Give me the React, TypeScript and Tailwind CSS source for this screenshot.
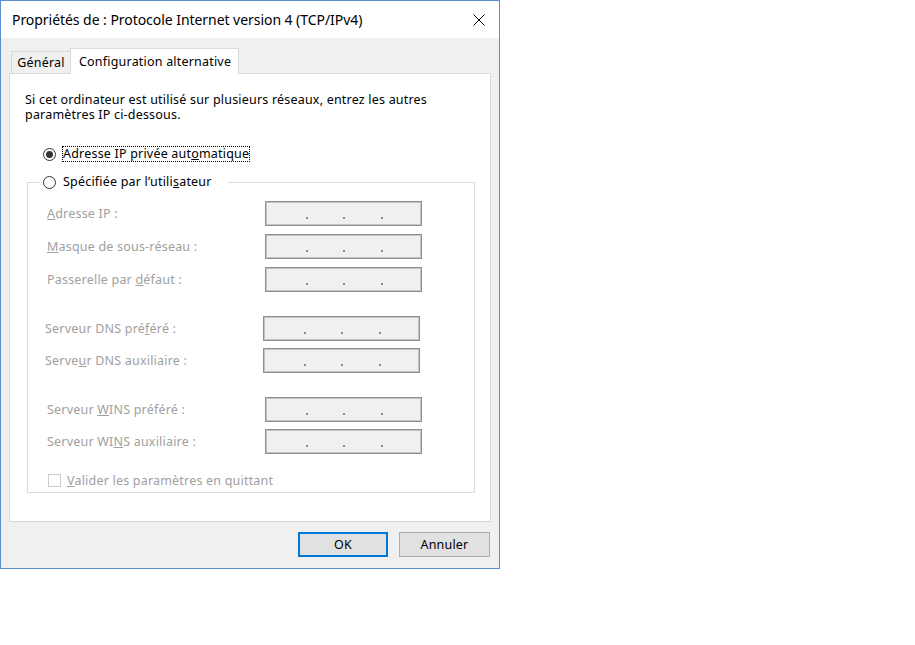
import React from "react";

const IpField = () => (
  <div className="w-[157px] h-[25px] border border-[#8f8f8f] bg-[#f0f0f0] shadow-[inset_0_0_0_1px_#c4c4c4] flex items-start pt-[15px]">
    <span className="ml-[40px] w-[2px] h-[2px] bg-[#8585a8]" />
    <span className="ml-[35px] w-[2px] h-[2px] bg-[#8585a8]" />
    <span className="ml-[36px] w-[2px] h-[2px] bg-[#8585a8]" />
  </div>
);

const Row = ({ children, shift }: { children: React.ReactNode; shift?: boolean }) => (
  <div className={"flex items-center h-[25px] " + (shift ? "pl-[17px]" : "pl-[19px]")}>
    <span className="w-[218px] text-[#a0a0a0] whitespace-nowrap">{children}</span>
    <IpField />
  </div>
);

const Radio = ({ checked }: { checked?: boolean }) => (
  <span className="w-[13px] h-[13px] rounded-full border border-[#333333] bg-white flex items-center justify-center shrink-0">
    {checked && <span className="w-[7px] h-[7px] rounded-full bg-[#333333]" />}
  </span>
);

export default function App() {
  return (
    <div
      className="w-[915px] h-[645px] bg-white text-black text-[12.5px] leading-[15px] tracking-[0.2px]"
      style={{ fontFamily: '"Segoe UI", "Noto Sans", sans-serif' }}
    >
      <div className="w-[500px] h-[569px] border border-[#5b8bd0] bg-[#f0f0f0] flex flex-col">
        {/* Title bar */}
        <div className="h-[37px] bg-white flex items-center justify-between pl-[11px]">
          <span className="text-[14px] tracking-[-0.05px] whitespace-nowrap">Propriétés de : Protocole Internet version 4 (TCP/IPv4)</span>
          <svg width="12" height="12" viewBox="0 0 12 12" className="mr-[14px] mt-[1px]">
            <path d="M0.5 0.5 L11.5 11.5 M11.5 0.5 L0.5 11.5" stroke="#000" strokeWidth="1" />
          </svg>
        </div>

        {/* Tabs */}
        <div className="mt-[10px] pl-[10px] flex items-end h-[25px]">
          <div className="w-[59px] h-[22px] border-l border-t border-[#d9d9d9] bg-[#f0f0f0] flex items-center justify-center">
            Général
          </div>
          <div className="relative z-10 w-[169px] h-[26px] -mb-px border-l border-t border-r border-[#d9d9d9] bg-white flex items-center pl-[8px] whitespace-nowrap">
            Configuration alternative
          </div>
        </div>

        {/* Panel */}
        <div className="mx-[8px] h-[449px] border border-[#d9d9d9] bg-white pt-[18px] px-[15px]">
          <div className="h-[15px] whitespace-nowrap">
            Si cet ordinateur est utilisé sur plusieurs réseaux, entrez les autres
          </div>
          <div className="h-[15px] whitespace-nowrap">paramètres IP ci-dessous.</div>

          <div className="mt-[24px] ml-[18px] h-[16px] flex items-center gap-[6px]">
            <Radio checked />
            <span className="border border-dotted border-black leading-[14px] whitespace-nowrap">
              Adresse IP privée aut<u>o</u>matique
            </span>
          </div>

          <fieldset className="mt-[12px] ml-[2px] border border-[#dcdcdc] pb-[4px]">
            <legend className="ml-[12px] pl-[3px] w-[188px]">
              <div className="h-[16px] flex items-center gap-[6px]">
                <Radio />
                <span className="border border-transparent leading-[14px] whitespace-nowrap">
                  Spécifiée par l’utili<u>s</u>ateur
                </span>
              </div>
            </legend>

            <div className="mt-[11px] flex flex-col gap-[8px]">
              <Row>
                <u>A</u>dresse IP :
              </Row>
              <Row>
                <u>M</u>asque de sous-réseau :
              </Row>
              <Row>
                Passerelle par <u>d</u>éfaut :
              </Row>
            </div>

            <div className="mt-[24px] flex flex-col gap-[7px]">
              <Row shift>
                Serveur DNS pré<u>f</u>éré :
              </Row>
              <Row shift>
                Serve<u>u</u>r DNS auxiliaire :
              </Row>
            </div>

            <div className="mt-[24px] flex flex-col gap-[7px]">
              <Row>
                Serveur <u>W</u>INS préféré :
              </Row>
              <Row>
                Serveur WI<u>N</u>S auxiliaire :
              </Row>
            </div>

            <div className="mt-[18px] h-[16px] pl-[20px] flex items-center gap-[6px]">
              <span className="w-[13px] h-[13px] border border-[#cccccc] bg-white shrink-0" />
              <span className="text-[#a0a0a0] whitespace-nowrap">
                <u>V</u>alider les paramètres en quittant
              </span>
            </div>
          </fieldset>
        </div>

        {/* Buttons */}
        <div className="mt-[10px] pr-[9px] flex justify-end gap-[11px]">
          <button className="w-[90px] h-[25px] border-2 border-[#0078d7] bg-[#e1e1e1] flex items-center justify-center">
            OK
          </button>
          <button className="w-[91px] h-[25px] border border-[#adadad] bg-[#e1e1e1] flex items-center justify-center">
            Annuler
          </button>
        </div>
      </div>
    </div>
  );
}
